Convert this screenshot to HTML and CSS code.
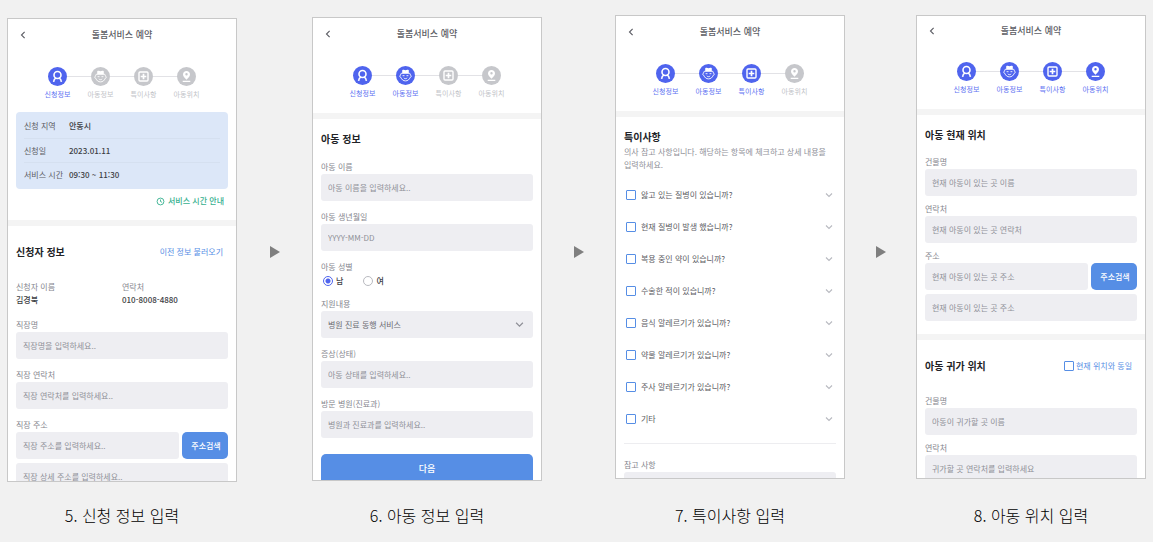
FILE: index.html
```
<!DOCTYPE html>
<html lang="ko">
<head>
    <meta charset="UTF-8">
    <meta name="viewport" content="width=device-width, initial-scale=1.0">
    <title>돌봄서비스 예약</title>
    <link rel="stylesheet" href="styles.css">
</head>
<body>
    <!-- shared icons -->
    <svg class="icon-defs" aria-hidden="true">
        <symbol id="icon-back" viewBox="0 0 8 8">
            <path d="M5.300 1.500 2.800 4l2.500 2.500" fill="none" stroke="currentColor" stroke-width=".9"/>
        </symbol>
        <symbol id="icon-down" viewBox="0 0 8 8">
            <path d="M1 2.500 4 5.500l3-3" fill="none" stroke="currentColor" stroke-width="1.100"/>
        </symbol>
        <symbol id="icon-clock" viewBox="0 0 10 10">
            <path d="M5 1.200a3.800 3.800 0 1 0 0 7.600a3.800 3.800 0 1 0 0-7.600M5 2.800V5l1.800 1" fill="none" stroke="currentColor" stroke-width="1"/>
        </symbol>
        <symbol id="icon-person" viewBox="0 0 19 19">
            <circle cx="9.500" cy="8" r="3.500" fill="none" stroke="#fff" stroke-width="1.600"/>
            <path d="M5.600 14.800c.2-2 1-3.100 2.400-3.700M13.400 14.800c-.2-2-1-3.100-2.400-3.700" fill="none" stroke="#fff" stroke-width="1.600"/>
        </symbol>
        <symbol id="icon-child" viewBox="0 0 19 19">
            <path d="M6.200 4.200c1-.8 2.200-.6 3.300.1 1.100-.7 2.300-.9 3.300-.1v3.100H6.200z" fill="#fff"/>
            <path d="M5.200 7.300C4.700 8 4.700 8.600 4.700 9.100c-1.300 0-1.300 2.200.2 2.300.6 2.100 2.500 3.500 4.600 3.500s4-1.400 4.600-3.500c1.500-.1 1.500-2.300.2-2.300 0-.5 0-1.100-.5-1.800z" fill="none" stroke="#fff" stroke-width=".9"/>
            <path d="M6.600 9.700h1.900M10.500 9.700h1.900M7.800 11.900c.9 1 2.500 1 3.400 0" fill="none" stroke="#fff" stroke-width=".9"/>
        </symbol>
        <symbol id="icon-plus" viewBox="0 0 19 19">
            <rect x="5" y="5" width="9" height="9" rx="1" fill="none" stroke="#fff" stroke-width="1.400"/>
            <path d="M9.500 6.700v5.600M6.700 9.500h5.600" stroke="#fff" stroke-width="1.700"/>
        </symbol>
        <symbol id="icon-pin" viewBox="0 0 19 19">
            <path fill-rule="evenodd" d="M9.500 4C7.500 4 6 5.500 6 7.400c0 2.100 2 3.500 3.500 5.400C11 10.900 13 9.500 13 7.400 13 5.500 11.500 4 9.500 4m0 2.100a1.200 1.200 0 1 1 0 2.400a1.200 1.200 0 1 1 0-2.400" fill="#fff"/>
            <path d="M5.700 14.300h7.600" stroke="#fff" stroke-width="1.200"/>
        </symbol>
        <symbol id="icon-next" viewBox="0 0 10 12">
            <path d="M0 0 10 6 0 12z" fill="#7f7f7f"/>
        </symbol>
    </svg>

    <main class="flow">
        <figure class="step-figure">
            <section class="screen screen-applicant">
                <header class="topbar">
                    <button type="button" class="back" aria-label="뒤로"><svg><use href="#icon-back"/></svg></button>
                    <h1>돌봄서비스 예약</h1>
                </header>
                <ol class="progress">
                    <li class="on"><svg><use href="#icon-person"/></svg>신청정보</li>
                    <li><svg><use href="#icon-child"/></svg>아동정보</li>
                    <li><svg><use href="#icon-plus"/></svg>특이사항</li>
                    <li><svg><use href="#icon-pin"/></svg>아동위치</li>
                </ol>
                <div class="summary-wrap">
                    <dl class="summary">
                        <div><dt>신청 지역</dt><dd>안동시</dd></div>
                        <div><dt>신청일</dt><dd>2023.01.11</dd></div>
                        <div><dt>서비스 시간</dt><dd>09:30 ~ 11:30</dd></div>
                    </dl>
                    <a href="#" class="time-link"><svg><use href="#icon-clock"/></svg>서비스 시간 안내</a>
                </div>
                <form class="section section-tall">
                    <div class="section-head">
                        <h2>신청자 정보</h2>
                        <a href="#" class="load-link">이전 정보 불러오기</a>
                    </div>
                    <dl class="person">
                        <div><dt>신청자 이름</dt><dd>김경북</dd></div>
                        <div><dt>연락처</dt><dd>010-8008-4880</dd></div>
                    </dl>
                    <div class="field">
                        <label for="company">직장명</label>
                        <input type="text" id="company" placeholder="직장명을 입력하세요..">
                    </div>
                    <div class="field">
                        <label for="company-tel">직장 연락처</label>
                        <input type="text" id="company-tel" placeholder="직장 연락처를 입력하세요..">
                    </div>
                    <div class="field">
                        <label for="company-addr">직장 주소</label>
                        <div class="address">
                            <input type="text" id="company-addr" placeholder="직장 주소를 입력하세요..">
                            <button type="button">주소검색</button>
                        </div>
                        <input type="text" class="detail" aria-label="직장 상세 주소" placeholder="직장 상세 주소를 입력하세요..">
                    </div>
                </form>
            </section>
            <figcaption>5. 신청 정보 입력</figcaption>
        </figure>

        <svg class="next"><use href="#icon-next"/></svg>

        <figure class="step-figure">
            <section class="screen screen-child">
                <header class="topbar">
                    <button type="button" class="back" aria-label="뒤로"><svg><use href="#icon-back"/></svg></button>
                    <h1>돌봄서비스 예약</h1>
                </header>
                <ol class="progress">
                    <li class="on"><svg><use href="#icon-person"/></svg>신청정보</li>
                    <li class="on"><svg><use href="#icon-child"/></svg>아동정보</li>
                    <li><svg><use href="#icon-plus"/></svg>특이사항</li>
                    <li><svg><use href="#icon-pin"/></svg>아동위치</li>
                </ol>
                <form class="section">
                    <div class="section-head"><h2>아동 정보</h2></div>
                    <div class="field">
                        <label for="child-name">아동 이름</label>
                        <input type="text" id="child-name" placeholder="아동 이름을 입력하세요..">
                    </div>
                    <div class="field">
                        <label for="child-birth">아동 생년월일</label>
                        <input type="text" id="child-birth" placeholder="YYYY-MM-DD">
                    </div>
                    <fieldset class="field">
                        <legend>아동 성별</legend>
                        <div class="radios">
                            <label><input type="radio" name="gender" checked>남</label>
                            <label><input type="radio" name="gender">여</label>
                        </div>
                    </fieldset>
                    <div class="field">
                        <label for="support">지원내용</label>
                        <div class="select-box">
                            <select id="support"><option>병원 진료 동행 서비스</option></select>
                            <svg><use href="#icon-down"/></svg>
                        </div>
                    </div>
                    <div class="field">
                        <label for="symptom">증상(상태)</label>
                        <input type="text" id="symptom" placeholder="아동 상태를 입력하세요..">
                    </div>
                    <div class="field">
                        <label for="hospital">방문 병원(진료과)</label>
                        <input type="text" id="hospital" placeholder="병원과 진료과를 입력하세요..">
                    </div>
                    <button type="submit" class="submit">다음</button>
                </form>
            </section>
            <figcaption>6. 아동 정보 입력</figcaption>
        </figure>

        <svg class="next"><use href="#icon-next"/></svg>

        <figure class="step-figure">
            <section class="screen">
                <header class="topbar">
                    <button type="button" class="back" aria-label="뒤로"><svg><use href="#icon-back"/></svg></button>
                    <h1>돌봄서비스 예약</h1>
                </header>
                <ol class="progress">
                    <li class="on"><svg><use href="#icon-person"/></svg>신청정보</li>
                    <li class="on"><svg><use href="#icon-child"/></svg>아동정보</li>
                    <li class="on"><svg><use href="#icon-plus"/></svg>특이사항</li>
                    <li><svg><use href="#icon-pin"/></svg>아동위치</li>
                </ol>
                <form class="section">
                    <h2>특이사항</h2>
                    <p class="guide">의사 참고 사항입니다. 해당하는 항목에 체크하고 상세 내용을 입력하세요.</p>
                    <ul class="checks">
                        <li><label><input type="checkbox">앓고 있는 질병이 있습니까?</label><svg><use href="#icon-down"/></svg></li>
                        <li><label><input type="checkbox">현재 질병이 발생 했습니까?</label><svg><use href="#icon-down"/></svg></li>
                        <li><label><input type="checkbox">복용 중인 약이 있습니까?</label><svg><use href="#icon-down"/></svg></li>
                        <li><label><input type="checkbox">수술한 적이 있습니까?</label><svg><use href="#icon-down"/></svg></li>
                        <li><label><input type="checkbox">음식 알레르기가 있습니까?</label><svg><use href="#icon-down"/></svg></li>
                        <li><label><input type="checkbox">약물 알레르기가 있습니까?</label><svg><use href="#icon-down"/></svg></li>
                        <li><label><input type="checkbox">주사 알레르기가 있습니까?</label><svg><use href="#icon-down"/></svg></li>
                        <li><label><input type="checkbox">기타</label><svg><use href="#icon-down"/></svg></li>
                    </ul>
                    <div class="note">
                        <label for="note">참고 사항</label>
                        <input type="text" id="note">
                    </div>
                </form>
            </section>
            <figcaption>7. 특이사항 입력</figcaption>
        </figure>

        <svg class="next"><use href="#icon-next"/></svg>

        <figure class="step-figure">
            <section class="screen screen-location">
                <header class="topbar">
                    <button type="button" class="back" aria-label="뒤로"><svg><use href="#icon-back"/></svg></button>
                    <h1>돌봄서비스 예약</h1>
                </header>
                <ol class="progress">
                    <li class="on"><svg><use href="#icon-person"/></svg>신청정보</li>
                    <li class="on"><svg><use href="#icon-child"/></svg>아동정보</li>
                    <li class="on"><svg><use href="#icon-plus"/></svg>특이사항</li>
                    <li class="on"><svg><use href="#icon-pin"/></svg>아동위치</li>
                </ol>
                <form class="section">
                    <div class="section-head"><h2>아동 현재 위치</h2></div>
                    <div class="field">
                        <label for="now-name">건물명</label>
                        <input type="text" id="now-name" placeholder="현재 아동이 있는 곳 이름">
                    </div>
                    <div class="field">
                        <label for="now-tel">연락처</label>
                        <input type="text" id="now-tel" placeholder="현재 아동이 있는 곳 연락처">
                    </div>
                    <div class="field">
                        <label for="now-addr">주소</label>
                        <div class="address">
                            <input type="text" id="now-addr" placeholder="현재 아동이 있는 곳 주소">
                            <button type="button">주소검색</button>
                        </div>
                        <input type="text" class="detail" aria-label="상세 주소" placeholder="현재 아동이 있는 곳 주소">
                    </div>
                </form>
                <form class="section section-tall">
                    <div class="section-head">
                        <h2>아동 귀가 위치</h2>
                        <label class="same"><input type="checkbox">현재 위치와 동일</label>
                    </div>
                    <div class="field">
                        <label for="home-name">건물명</label>
                        <input type="text" id="home-name" placeholder="아동이 귀가할 곳 이름">
                    </div>
                    <div class="field">
                        <label for="home-tel">연락처</label>
                        <input type="text" id="home-tel" placeholder="귀가할 곳 연락처를 입력하세요">
                    </div>
                </form>
            </section>
            <figcaption>8. 아동 위치 입력</figcaption>
        </figure>
    </main>
</body>
</html>
```
FILE: styles.css
```
* {
    box-sizing: border-box;
}
body {
    margin: 0;
    background-color: #f1f1f1;
    font-family: "Noto Sans CJK KR", "Noto Sans", sans-serif;
    font-size: 8px;
    line-height: 14px;
    color: #5c5d64;
}
h1, h2, p, ol, ul, dl, dd, figure, fieldset, legend {
    margin: 0;
    padding: 0;
    border: none;
    list-style: none;
}
input, select, button {
    margin: 0;
    font: inherit;
    color: inherit;
    border: none;
}
a {
    text-decoration: none;
}
.icon-defs {
    display: none;
}

/* four screens with an arrow between each */
.flow {
    display: grid;
    grid-template-columns: 1fr 75px 1fr 73px 1fr 71px 1fr;
    padding: 15px 7px 0;
}
.step-figure {
    display: flex;
    flex-direction: column;
    justify-content: space-between;
    min-width: 0;
}
.step-figure figcaption {
    margin-top: 20px;
    text-align: center;
    font-size: 16px;
    font-weight: 300;
    line-height: 26px;
    color: #000;
}
.next {
    width: 10px;
    height: 12px;
    margin-top: 231px;
    justify-self: center;
}
.screen {
    aspect-ratio: 230 / 464;
    min-height: 0;
    overflow: hidden;
    background-color: white;
    border: 1px solid #c8c8c8;
}
.screen-applicant {
    margin-top: 3px;
}
.screen-child {
    margin-top: 2px;
}

/* title bar */
.topbar {
    display: grid;
    grid-template-columns: 30px 1fr 30px;
    align-items: center;
    height: 32px;
}
.screen-location .topbar {
    height: 30px;
}
.topbar h1 {
    text-align: center;
    font-size: 9px;
    font-weight: 500;
}
.back {
    display: flex;
    justify-content: center;
    padding: 0;
    background: none;
    color: #5c5d64;
    cursor: pointer;
}
.back svg {
    width: 10px;
    height: 10px;
}

/* progress */
.progress {
    display: flex;
    justify-content: center;
    padding: 16px 0 14px;
}
.progress li {
    position: relative;
    display: flex;
    flex-direction: column;
    align-items: center;
    gap: 2px;
    width: 43px;
    font-size: 7px;
    line-height: 12px;
    color: #c2c3c8;
}
.progress svg {
    width: 19px;
    height: 19px;
    border-radius: 50%;
    background-color: #c6c7cb;
}
.progress .on {
    color: #6072f2;
}
.progress .on svg {
    background-color: #4f64ee;
}
.progress li + li::before {
    content: "";
    position: absolute;
    top: 9px;
    left: -12px;
    width: 24px;
    height: 1px;
    background-color: #e2e2e6;
}

/* reservation summary */
.summary-wrap {
    padding: 0 8px 12px;
}
.screen-applicant .progress {
    padding-bottom: 12px;
}
.summary {
    padding: 2px 8px 3px;
    border-radius: 4px;
    background-color: #dce7f8;
}
.summary div {
    display: flex;
    align-items: center;
    height: 24px;
}
.summary div + div {
    border-top: 1px solid #d5e0f0;
}
.summary dt {
    width: 45px;
    white-space: nowrap;
}
.summary dd {
    font-weight: 500;
    color: #3c3e44;
}
.time-link {
    display: flex;
    justify-content: flex-end;
    align-items: center;
    gap: 3px;
    margin-top: 5px;
    padding-right: 4px;
    font-weight: 500;
    color: #36b08f;
}
.time-link svg {
    width: 9px;
    height: 9px;
}

/* form sections */
.section {
    padding: 12px 8px 13px;
    border-top: 6px solid #f4f4f4;
}
.section-tall {
    padding-top: 18px;
}
.section h2 {
    font-size: 10px;
    font-weight: 700;
    line-height: 16px;
    color: #222327;
}
.section-head {
    display: flex;
    justify-content: space-between;
    align-items: center;
    padding-bottom: 4px;
}
.screen-location .section-head {
    padding-bottom: 6px;
}
.screen-location .section-tall .section-head {
    padding-bottom: 14px;
}
.load-link {
    padding-right: 5px;
    color: #568ee5;
}
.person {
    display: grid;
    grid-template-columns: 1fr 1fr;
    margin: 16px 0 12px;
    color: #85868e;
}
.person dd {
    font-weight: 500;
    line-height: 12px;
    color: #3c3e44;
}
.field {
    margin-top: 9px;
}
.screen-location .field {
    margin-top: 6px;
}
.field > label,
.field legend,
.note label {
    display: block;
    color: #85868e;
}
.field input[type="text"],
.note input,
.select-box select {
    display: block;
    width: 100%;
    height: 27px;
    padding: 0 7px;
    border-radius: 3px;
    background-color: #eeeef2;
}
.field input::placeholder {
    color: #8f9098;
    opacity: 1;
}
.address {
    display: flex;
    gap: 3px;
}
.address input {
    flex: 1;
    min-width: 0;
}
.address button {
    width: 46px;
    padding: 0 0 0 2px;
    border-radius: 5px;
    background-color: #568ee5;
    font-weight: 500;
    color: white;
    cursor: pointer;
}
.field .detail {
    margin-top: 4px;
}
.select-box {
    display: grid;
    align-items: center;
    color: #6b6c73;
}
.select-box select,
.select-box svg {
    grid-area: 1 / 1;
}
.select-box select {
    appearance: none;
}
.select-box svg {
    width: 9px;
    height: 9px;
    margin-right: 9px;
    justify-self: end;
    color: #8f9098;
    pointer-events: none;
}
.radios {
    display: flex;
    gap: 20px;
    padding-left: 2px;
    color: #3c3e44;
    font-weight: 500;
}
.radios label {
    display: flex;
    align-items: center;
    gap: 3px;
}
.radios input {
    appearance: none;
    width: 10px;
    height: 10px;
    border: 1px solid #b9bac0;
    border-radius: 50%;
}
.radios input:checked {
    border-color: #4f64ee;
    background: radial-gradient(#4f64ee 0 2px, white 3px);
}
.submit {
    width: 100%;
    height: 30px;
    margin-top: 16px;
    border-radius: 5px;
    background-color: #568ee5;
    font-size: 9px;
    font-weight: 500;
    color: white;
    cursor: pointer;
}

/* check list */
.guide {
    margin-bottom: 8px;
    line-height: 13px;
    word-break: keep-all;
    color: #8f9098;
}
.checks li {
    display: flex;
    justify-content: space-between;
    align-items: center;
    height: 32px;
    padding: 0 3px 0 2px;
}
.checks label,
.same {
    display: flex;
    align-items: center;
    gap: 5px;
}
.checks svg {
    width: 8px;
    height: 8px;
    color: #b8b9c0;
}
.checks input,
.same input {
    appearance: none;
    width: 10px;
    height: 10px;
    border: 1px solid #568ee5;
    border-radius: 1px;
    background-color: white;
}
.checks input:checked,
.same input:checked {
    background-color: #568ee5;
}
.same {
    gap: 2px;
    padding-right: 5px;
    color: #568ee5;
}
.note {
    margin-top: 8px;
    padding-top: 14px;
    border-top: 1px solid #ededf0;
}
```
